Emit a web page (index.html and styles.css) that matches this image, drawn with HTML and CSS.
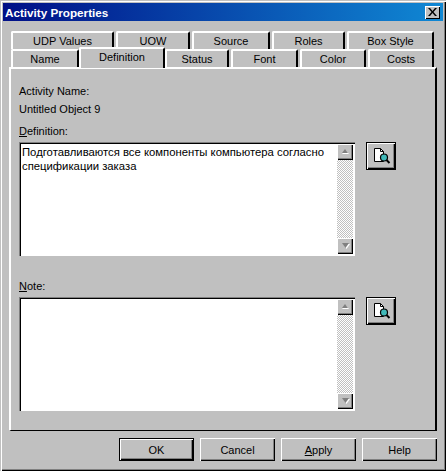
FILE: index.html
```html
<!DOCTYPE html>
<html lang="en">
<head>
    <meta charset="UTF-8">
    <title>Activity Properties</title>
    <link rel="stylesheet" href="styles.css">
</head>
<body>
    <div class="window">
        <div class="titlebar">
            <span class="title">Activity Properties</span>
            <span class="close">
                <svg width="9" height="8" viewBox="0 0 9 8"><path d="M0 0h2l2.500 3L7 0h2L5.500 4 9 8H7L4.500 5 2 8H0l3.500-4z" fill="#000"/></svg>
            </span>
        </div>

        <div class="tabs">
            <div class="tab-row">
                <div class="tab tab-udp">UDP Values</div>
                <div class="tab tab-uow">UOW</div>
                <div class="tab tab-source">Source</div>
                <div class="tab tab-roles">Roles</div>
                <div class="tab tab-box">Box Style</div>
            </div>
            <div class="tab-row">
                <div class="tab tab-name">Name</div>
                <div class="tab tab-active">Definition</div>
                <div class="tab tab-status">Status</div>
                <div class="tab tab-font">Font</div>
                <div class="tab tab-color">Color</div>
                <div class="tab tab-costs">Costs</div>
            </div>
        </div>

        <div class="panel">
            <div class="label">Activity Name:</div>
            <div class="label name-value">Untitled Object 9</div>

            <div class="label field-label"><u>D</u>efinition:</div>
            <div class="field-row">
                <div class="textbox">
                    <div class="text">Подготавливаются все компоненты компьютера согласно спецификации заказа</div>
                    <div class="scrollbar">
                        <div class="arrow"><svg width="9" height="6" viewBox="0 0 9 6"><path d="M4.500 1L8 5H1z" fill="#fff"/><path d="M4 0L7 4H1z" fill="#808080"/></svg></div>
                        <div class="arrow"><svg width="9" height="6" viewBox="0 0 9 6"><path d="M2 1h7L5.500 6z" fill="#fff"/><path d="M1 0h7L4.500 5z" fill="#808080"/></svg></div>
                    </div>
                </div>
                <div class="zoom-btn">
                    <svg width="20" height="20" viewBox="0 0 20 20">
                        <path d="M3.500 2.500h6l3 3v10h-9z" fill="#fff" stroke="#000"/>
                        <path d="M9.500 2.500v3h3" fill="none" stroke="#000"/>
                        <circle cx="13" cy="11.500" r="3.500" fill="#40b8b8" stroke="#000" stroke-width="1.200"/>
                        <path d="M15.500 14l3 3" stroke="#000" stroke-width="2"/>
                    </svg>
                </div>
            </div>

            <div class="label field-label note-label"><u>N</u>ote:</div>
            <div class="field-row">
                <div class="textbox">
                    <div class="text"></div>
                    <div class="scrollbar">
                        <div class="arrow"><svg width="9" height="6" viewBox="0 0 9 6"><path d="M4.500 1L8 5H1z" fill="#fff"/><path d="M4 0L7 4H1z" fill="#808080"/></svg></div>
                        <div class="arrow"><svg width="9" height="6" viewBox="0 0 9 6"><path d="M2 1h7L5.500 6z" fill="#fff"/><path d="M1 0h7L4.500 5z" fill="#808080"/></svg></div>
                    </div>
                </div>
                <div class="zoom-btn">
                    <svg width="20" height="20" viewBox="0 0 20 20">
                        <path d="M3.500 2.500h6l3 3v10h-9z" fill="#fff" stroke="#000"/>
                        <path d="M9.500 2.500v3h3" fill="none" stroke="#000"/>
                        <circle cx="13" cy="11.500" r="3.500" fill="#40b8b8" stroke="#000" stroke-width="1.200"/>
                        <path d="M15.500 14l3 3" stroke="#000" stroke-width="2"/>
                    </svg>
                </div>
            </div>
        </div>

        <div class="buttons">
            <div class="btn btn-default">OK</div>
            <div class="btn">Cancel</div>
            <div class="btn"><u>A</u>pply</div>
            <div class="btn">Help</div>
        </div>
    </div>
</body>
</html>
```

FILE: styles.css
```css
* {
    box-sizing: border-box;
}

body {
    margin: 0px;
    background: #c0c0c0;
    font-family: 'Liberation Sans', Arial, sans-serif;
    font-size: 11px;
    color: #000;
}

.window {
    width: 446px;
    height: 471px;
    padding: 3px 9px 0px 9px;
    background: #c0c0c0;
    box-shadow: inset 1px 1px #c0c0c0, inset 2px 2px #fff, inset -1px -1px #000, inset -2px -2px #808080;
}

/* title bar */
.titlebar {
    display: flex;
    align-items: center;
    justify-content: space-between;
    height: 18px;
    margin: 0px -6px 0px -6px;
    padding: 0px 3px 0px 2px;
    background: linear-gradient(90deg, #000f87, #1088d4);
}

.title {
    color: #fff;
    font-weight: bold;
    font-size: 11.7px;
}

.close {
    display: flex;
    align-items: center;
    justify-content: center;
    width: 15px;
    height: 13px;
    background: #c0c0c0;
    box-shadow: inset 1px 1px #fff, inset -1px -1px #000;
}

/* tabs */
.tabs {
    margin-top: 10px;
    padding-left: 2px;
}

.tab-row {
    display: flex;
    height: 18px;
    gap: 2px;
}

.tab {
    display: flex;
    align-items: center;
    justify-content: center;
    height: 18px;
    background: #c0c0c0;
    border-top: 2px solid #fff;
    border-left: 2px solid #fff;
    border-right: 2px solid #000;
    border-radius: 2px 2px 0px 0px;
}

.tab-active {
    position: relative;
    z-index: 1;
    width: 86px;
    height: 21px;
    margin: -2px -2px 0px -2px;
    padding-bottom: 3px;
}

.tab-udp { width: 103px; }
.tab-uow { width: 74px; }
.tab-source { width: 78px; }
.tab-roles { width: 73px; }
.tab-box { width: 87px; }
.tab-name { width: 68px; }
.tab-status { width: 64px; }
.tab-font { width: 67px; }
.tab-color { width: 66px; }
.tab-costs { width: 66px; }

/* page of the tab control */
.panel {
    height: 364px;
    width: 428px;
    padding: 15px 0px 0px 10px;
    border-top: 2px solid #fff;
    border-left: 2px solid #fff;
    border-right: 2px solid #000;
    border-bottom: 1px solid #000;
}

.label {
    line-height: 14px;
    margin-left: -2px;
}

.name-value {
    margin-top: 4px;
}

.field-label {
    margin-top: 8px;
    height: 18px;
}

.note-label {
    margin-top: 23px;
    height: 18px;
}

.field-row {
    display: flex;
    align-items: flex-start;
    gap: 11px;
    margin-left: -2px;
}

.textbox {
    display: flex;
    width: 336px;
    height: 114px;
    padding: 1px 2px 2px 1px;
    background: #fff;
    border-top: 1px solid #808080;
    border-left: 1px solid #808080;
    box-shadow: inset 1px 1px #000, inset -1px -1px #fff;
}

.text {
    flex: 1;
    padding: 1px 1px 0px 1px;
    font-size: 11.3px;
    line-height: 14px;
}

.scrollbar {
    display: flex;
    flex-direction: column;
    justify-content: space-between;
    width: 16px;
    background: repeating-conic-gradient(#c0c0c0 0 25%, #fff 0 50%) 0 0 / 2px 2px;
}

.arrow {
    display: flex;
    align-items: center;
    justify-content: center;
    height: 16px;
    background: #c0c0c0;
    box-shadow: inset 1px 1px #fff, inset -1px -1px #000, inset -2px -2px #808080;
}

.zoom-btn {
    display: flex;
    align-items: center;
    justify-content: center;
    width: 30px;
    height: 28px;
    background: #c0c0c0;
    border: 1px solid #000;
    box-shadow: inset 1px 1px #fff, inset -1px -1px #000, inset -2px -2px #808080;
}

/* dialog buttons */
.buttons {
    display: flex;
    justify-content: flex-end;
    gap: 6px;
    margin-top: 7px;
}

.btn {
    display: flex;
    align-items: center;
    justify-content: center;
    width: 75px;
    height: 23px;
    background: #c0c0c0;
    box-shadow: inset 1px 1px #fff, inset -1px -1px #000, inset -2px -2px #808080;
}

.btn-default {
    border: 1px solid #000;
}
```
